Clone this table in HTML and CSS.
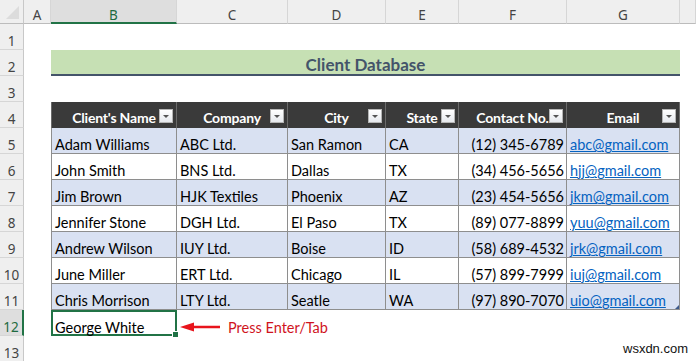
FILE: index.html
```html
<!DOCTYPE html>
<html>
<head>
<meta charset="utf-8">
<link rel="stylesheet" href="styles.css">
</head>
<body>
<div class="sheet">
  <div class="corner"><span class="tri"></span></div>
  <div class="ch">A</div><div class="ch sel">B</div><div class="ch">C</div><div class="ch">D</div><div class="ch">E</div><div class="ch">F</div><div class="ch">G</div><div class="ch"></div>

  <div class="rh">1</div><div class="c"></div><div class="c"></div><div class="c"></div><div class="c"></div><div class="c"></div><div class="c"></div><div class="c"></div><div class="c"></div>

  <div class="rh">2</div><div class="c"></div><div class="title">Client Database</div><div class="c"></div>

  <div class="rh">3</div><div class="c"></div><div class="c"></div><div class="c"></div><div class="c"></div><div class="c"></div><div class="c"></div><div class="c"></div><div class="c"></div>

  <div class="rh">4</div><div class="c"></div>
  <div class="th first">Client's Name<span class="btn"></span></div>
  <div class="th">Company<span class="btn"></span></div>
  <div class="th">City<span class="btn"></span></div>
  <div class="th">State<span class="btn"></span></div>
  <div class="th">Contact No.<span class="btn"></span></div>
  <div class="th">Email<span class="btn"></span></div>
  <div class="c"></div>

  <div class="rh">5</div><div class="c"></div>
  <div class="td first band">Adam Williams</div><div class="td band">ABC Ltd.</div><div class="td band">San Ramon</div><div class="td band">CA</div><div class="td band num">(12) 345-6789</div><div class="td band"><span class="link">abc@gmail.com</span></div>
  <div class="c"></div>

  <div class="rh">6</div><div class="c"></div>
  <div class="td first">John Smith</div><div class="td">BNS Ltd.</div><div class="td">Dallas</div><div class="td">TX</div><div class="td num">(34) 456-5656</div><div class="td"><span class="link">hjj@gmail.com</span></div>
  <div class="c"></div>

  <div class="rh">7</div><div class="c"></div>
  <div class="td first band">Jim Brown</div><div class="td band">HJK Textiles</div><div class="td band">Phoenix</div><div class="td band">AZ</div><div class="td band num">(23) 454-5656</div><div class="td band"><span class="link">jkm@gmail.com</span></div>
  <div class="c"></div>

  <div class="rh">8</div><div class="c"></div>
  <div class="td first">Jennifer Stone</div><div class="td">DGH Ltd.</div><div class="td">El Paso</div><div class="td">TX</div><div class="td num">(89) 077-8899</div><div class="td"><span class="link">yuu@gmail.com</span></div>
  <div class="c"></div>

  <div class="rh">9</div><div class="c"></div>
  <div class="td first band">Andrew Wilson</div><div class="td band">IUY Ltd.</div><div class="td band">Boise</div><div class="td band">ID</div><div class="td band num">(58) 689-4532</div><div class="td band"><span class="link">jrk@gmail.com</span></div>
  <div class="c"></div>

  <div class="rh">10</div><div class="c"></div>
  <div class="td first">June Miller</div><div class="td">ERT Ltd.</div><div class="td">Chicago</div><div class="td">IL</div><div class="td num">(57) 899-7999</div><div class="td"><span class="link">iuj@gmail.com</span></div>
  <div class="c"></div>

  <div class="rh">11</div><div class="c"></div>
  <div class="td first band">Chris Morrison</div><div class="td band">LTY Ltd.</div><div class="td band">Seatle</div><div class="td band">WA</div><div class="td band num">(97) 890-7070</div><div class="td band last"><span class="link">uio@gmail.com</span><span class="resize"></span></div>
  <div class="c"></div>

  <div class="rh sel">12</div><div class="c"></div>
  <div class="c active">George White<span class="handle"></span></div>
  <div class="c note">
    <svg class="arrow" width="42" height="10" viewBox="0 0 42 10"><path d="M0 5 L14 0.5 L14 3.8 L40 3.8 L40 6.2 L14 6.2 L14 9.5 Z" fill="#e8141c"/></svg>
    <span class="note-text">Press Enter/Tab</span>
  </div>
  <div class="c"></div><div class="c"></div><div class="c"></div><div class="c"></div><div class="c"></div>

  <div class="rh">13</div><div class="c"></div><div class="c"></div><div class="c"></div><div class="c"></div><div class="c"></div><div class="c"></div><div class="c"></div><div class="c"></div>
</div>
<div class="watermark">wsxdn.com</div>
</body>
</html>
```

FILE: styles.css
```css
html, body {
  margin: 0;
  padding: 0;
  background: #ffffff;
  overflow: hidden;
}

.sheet {
  display: grid;
  grid-template-columns: 24px 27px 126px 111px 98px 73px 108px 113px 16px;
  grid-template-rows: 24px repeat(13, 26px);
  font-family: "Lato", "Liberation Sans", sans-serif;
  font-size: 14.5px;
  color: #000;
}

.sheet > div {
  box-sizing: border-box;
  min-width: 0;
}

.corner {
  background: #efefef;
  border-right: 1px solid #c8c8c8;
  border-bottom: 1px solid #bcbcbc;
  position: relative;
}
.tri {
  position: absolute;
  right: 4px;
  bottom: 4px;
  width: 0;
  height: 0;
  border-left: 13px solid transparent;
  border-bottom: 13px solid #dcdcdc;
}

.ch {
  background: #efefef;
  border-right: 1px solid #d6d6d6;
  border-bottom: 1px solid #bcbcbc;
  display: flex;
  align-items: center;
  justify-content: center;
  font-family: "Noto Sans", "Open Sans", sans-serif;
  font-size: 13.5px;
  color: #444;
  padding-top: 7px;
}
.ch.sel {
  background: #dedede;
  color: #1e6b41;
  border-bottom: 2px solid #217346;
}

.rh {
  background: #efefef;
  border-right: 1px solid #c8c8c8;
  border-bottom: 1px solid #d6d6d6;
  display: flex;
  align-items: center;
  justify-content: center;
  font-family: "Noto Sans", "Open Sans", sans-serif;
  font-size: 13.5px;
  color: #444;
  padding-top: 8px;
}
.rh.sel {
  background: #dedede;
  color: #1e6b41;
  border-right: 2px solid #217346;
}

.title {
  grid-column: span 6;
  background: #c6e0b4;
  border-bottom: 2px solid #44546a;
  display: flex;
  align-items: center;
  justify-content: center;
  font-weight: bold;
  font-size: 17px;
  color: #44546a;
  padding-top: 5px;
}

.th {
  background: #3a3a3a;
  color: #fff;
  font-weight: bold;
  font-size: 14px;
  letter-spacing: -0.2px;
  display: flex;
  align-items: center;
  justify-content: center;
  position: relative;
  border-right: 1px solid #6a6a6a;
  padding-top: 5px;
}
.th.first {
  border-left: 1px solid #6a6a6a;
}
.btn {
  position: absolute;
  right: 3px;
  top: 7px;
  width: 14px;
  height: 14px;
  box-sizing: border-box;
  background: linear-gradient(#ffffff, #e6e9ee);
  border: 1px solid #b5b5b5;
}
.btn::after {
  content: "";
  position: absolute;
  left: 3px;
  top: 5px;
  width: 0;
  height: 0;
  border-left: 3px solid transparent;
  border-right: 3px solid transparent;
  border-top: 3px solid #555;
}

.td {
  background: #fff;
  border-right: 1px solid #8e8e8e;
  border-bottom: 1px solid #8e8e8e;
  display: flex;
  align-items: flex-start;
  padding: 8px 3px 0 3px;
  line-height: 17px;
  white-space: nowrap;
}
.td.first {
  border-left: 1px solid #8e8e8e;
}
.td.band {
  background: #d9e1f2;
}
.td.num {
  justify-content: flex-end;
  padding-right: 2px;
}
.td.last {
  position: relative;
}
.link {
  color: #0563c1;
  text-decoration-line: underline;
  text-decoration-thickness: 1px;
  text-underline-offset: 1px;
}
.resize {
  position: absolute;
  right: 0;
  bottom: 0;
  width: 0;
  height: 0;
  border-left: 4px solid transparent;
  border-bottom: 4px solid #3e5a8a;
}

.active {
  border: 2px solid #217346;
  display: flex;
  align-items: center;
  padding: 9px 2px 0 2px;
  position: relative;
}
.handle {
  position: absolute;
  right: -4px;
  bottom: -4px;
  width: 5px;
  height: 5px;
  background: #217346;
  border: 1px solid #fff;
}

.note {
  display: flex;
  align-items: center;
  white-space: nowrap;
  overflow: visible;
  padding-left: 3px;
  padding-top: 8px;
  position: relative;
  z-index: 1;
}
.arrow {
  flex: none;
  margin-top: -1px;
}
.note-text {
  margin-left: 6px;
  color: #d0141e;
  font-size: 14.5px;
}

.watermark {
  position: absolute;
  left: 623px;
  top: 341px;
  font-family: "Liberation Sans", Arial, sans-serif;
  font-size: 13px;
  color: #111;
}
```
